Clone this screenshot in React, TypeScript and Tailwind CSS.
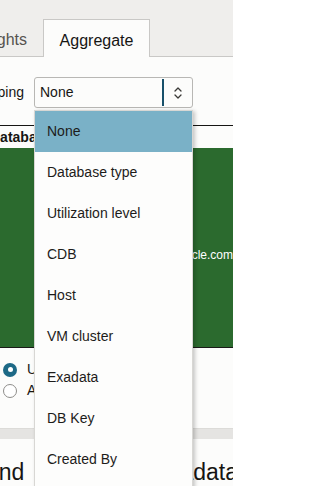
import React from "react";

const options = [
  "None",
  "Database type",
  "Utilization level",
  "CDB",
  "Host",
  "VM cluster",
  "Exadata",
  "DB Key",
  "Created By",
  "Created On",
];

const Chevrons = () => (
  <svg width="10" height="14" viewBox="0 0 10 14" fill="none">
    <path d="M2 5 L5 2 L8 5" stroke="#3a3936" strokeWidth="1.3" strokeLinecap="round" strokeLinejoin="round" />
    <path d="M2 9 L5 12 L8 9" stroke="#3a3936" strokeWidth="1.3" strokeLinecap="round" strokeLinejoin="round" />
  </svg>
);

const App = () => {
  return (
    <div
      className="relative w-[233px] h-[486px] overflow-hidden bg-[#fcfcfb] text-[#161513]"
      style={{ fontFamily: '"Liberation Sans", Arial, sans-serif' }}
    >
      {/* tabs */}
      <div className="flex items-end h-[57px] pt-[19px] bg-[#efeeec]">
        <div className="w-[43px] h-[38px] border-b border-[#c9c8c6] flex items-center justify-end overflow-hidden pr-[16px] pt-[4px]">
          <span className="whitespace-nowrap text-[16px] text-[#55534f]">Insights</span>
        </div>
        <div className="w-[107px] h-[38px] border border-b-0 border-[#c9c8c6] bg-[#fcfcfb] flex items-center justify-center pt-[4px]">
          <span className="text-[16px]">Aggregate</span>
        </div>
        <div className="flex-1 h-[38px] border-b border-[#c9c8c6]" />
      </div>

      {/* grouping select */}
      <div className="flex items-center h-[31px] mt-[20px]">
        <div className="w-[34px] flex justify-end overflow-hidden pr-[10px]">
          <span className="whitespace-nowrap text-[14px]">Grouping</span>
        </div>
        <div className="w-[159px] h-[31px] border border-[#b8b7b4] rounded-[3px] bg-[#fcfcfb] flex items-stretch">
          <div className="flex-1 flex items-center pl-[5px] text-[14px]">None</div>
          <div className="w-[2px] my-[1px] bg-[#17506a]" />
          <div className="w-[28px] flex items-center justify-center">
            <Chevrons />
          </div>
        </div>
      </div>

      {/* table behind */}
      <div className="h-px bg-[#161513] mt-[17px]" />
      <div className="h-[22px] flex items-center overflow-hidden">
        <span className="whitespace-nowrap text-[14px] font-bold ml-[-10px] pt-[1px]">Database name</span>
      </div>
      <div className="h-[199px] bg-[#2b6a2e] flex justify-end pt-[100px]">
        <span className="whitespace-nowrap text-[12px] leading-[14px] text-white">admin@oracle.com</span>
      </div>
      <div className="h-px bg-[#1a1a18]" />

      {/* radios */}
      <div className="mt-[11px] pl-[3px] flex flex-col">
        <div className="h-[21px] flex items-center gap-[10px]">
          <span className="shrink-0 w-[14px] h-[14px] rounded-full bg-[#1d6986] flex items-center justify-center">
            <span className="w-[5px] h-[5px] rounded-full bg-white" />
          </span>
          <span className="text-[14px]">Used</span>
        </div>
        <div className="h-[21px] flex items-center gap-[10px]">
          <span className="shrink-0 w-[14px] h-[14px] rounded-full border border-[#8e8d8a] bg-white" />
          <span className="text-[14px]">Allocated</span>
        </div>
      </div>

      <div className="h-[11px] mt-[27px] bg-[#e5e4e2] border-t border-[#dcdbd8]" />

      <div className="mt-[19px] flex justify-between whitespace-nowrap overflow-hidden text-[23px] leading-[28px]">
        <span className="ml-[-35px]">Trend</span>
        <span className="mr-[-5px]">Exadata</span>
      </div>

      {/* open dropdown list */}
      <div className="absolute left-[34px] top-[110px] w-[159px] h-[400px] bg-[#fdfdfc] border border-[#d8d7d4] shadow-[2px_1px_4px_rgba(0,0,0,0.22)]">
        {options.map((o, i) => (
          <div
            key={o}
            className={`h-[41px] flex items-center pl-[12px] text-[14px] text-[#1d1c1a] ${i === 0 ? "bg-[#7ab1c7]" : ""}`}
          >
            {o}
          </div>
        ))}
      </div>
    </div>
  );
};

export default App;
